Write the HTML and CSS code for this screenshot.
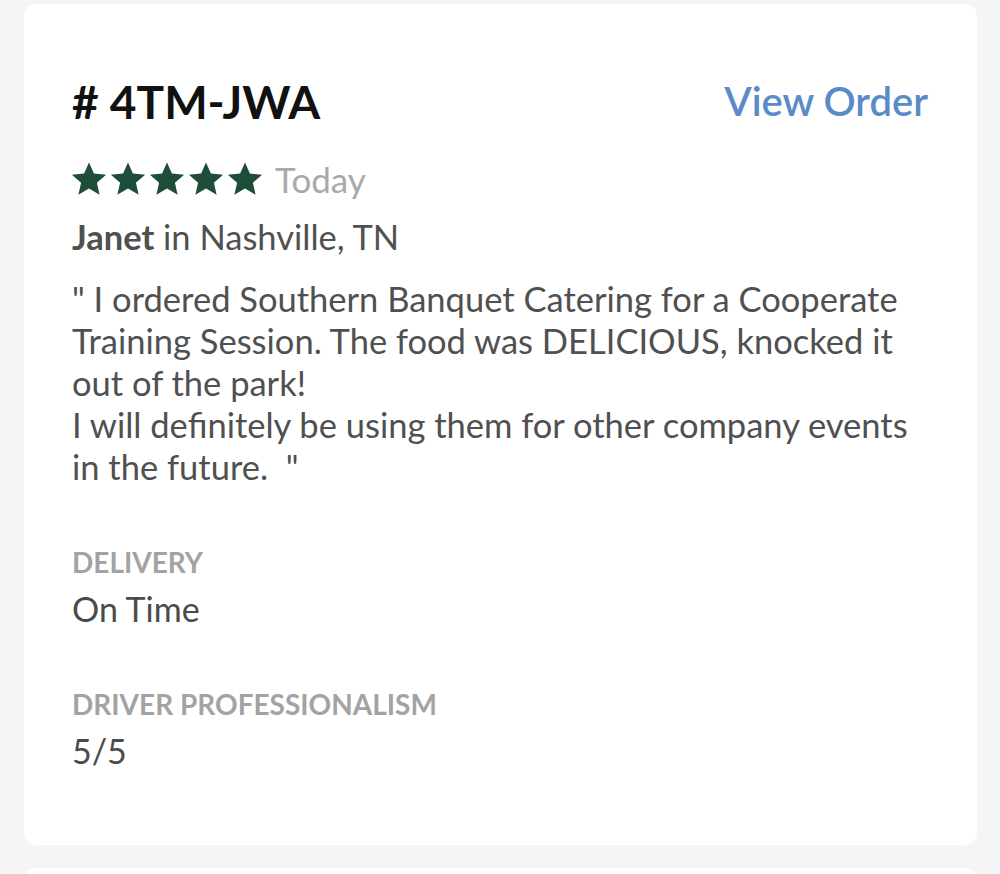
FILE: index.html
```html
<!DOCTYPE html>
<html>
<head>
<meta charset="utf-8">
<link rel="stylesheet" href="styles.css">
</head>
<body>
<div class="list">
  <div class="card">
    <div class="head">
      <h1 class="order-id"># 4TM-JWA</h1>
      <a class="view-link" href="#">View Order</a>
    </div>
    <div class="rating">
      <div class="stars">
        <svg viewBox="0 0 24 24" class="star"><path d="M12 1.5l3.1 7.1 7.7.7-5.8 5.1 1.7 7.6L12 18l-6.7 4 1.7-7.6-5.8-5.1 7.7-.7z"/></svg>
        <svg viewBox="0 0 24 24" class="star"><path d="M12 1.5l3.1 7.1 7.7.7-5.8 5.1 1.7 7.6L12 18l-6.7 4 1.7-7.6-5.8-5.1 7.7-.7z"/></svg>
        <svg viewBox="0 0 24 24" class="star"><path d="M12 1.5l3.1 7.1 7.7.7-5.8 5.1 1.7 7.6L12 18l-6.7 4 1.7-7.6-5.8-5.1 7.7-.7z"/></svg>
        <svg viewBox="0 0 24 24" class="star"><path d="M12 1.5l3.1 7.1 7.7.7-5.8 5.1 1.7 7.6L12 18l-6.7 4 1.7-7.6-5.8-5.1 7.7-.7z"/></svg>
        <svg viewBox="0 0 24 24" class="star"><path d="M12 1.5l3.1 7.1 7.7.7-5.8 5.1 1.7 7.6L12 18l-6.7 4 1.7-7.6-5.8-5.1 7.7-.7z"/></svg>
      </div>
      <span class="date">Today</span>
    </div>
    <p class="author"><strong>Janet</strong> in Nashville, TN</p>
    <p class="review">" I ordered Southern Banquet Catering for a Cooperate Training Session. The food was DELICIOUS, knocked it out of the park!<br>I will definitely be using them for other company events in the future.&nbsp; "</p>
    <div class="field">
      <div class="label">DELIVERY</div>
      <div class="value">On Time</div>
    </div>
    <div class="field">
      <div class="label">DRIVER PROFESSIONALISM</div>
      <div class="value">5/5</div>
    </div>
  </div>
  <div class="card next"></div>
</div>
</body>
</html>
```

FILE: styles.css
```css
html, body {
  margin: 0;
  padding: 0;
  background: #f4f5f7;
  font-family: Lato, "Liberation Sans", sans-serif;
}
.list {
  display: flex;
  flex-direction: column;
  gap: 23px;
  padding: 4px 23px 0 24px;
}
.card {
  background: #fff;
  border-radius: 12px;
  padding: 74px 48px 70px 48px;
  height: 841px;
  box-sizing: border-box;
}
.card.next {
  height: 200px;
}
.head {
  display: flex;
  justify-content: space-between;
  align-items: center;
  height: 46px;
}
.order-id {
  margin: 0;
  font-size: 46px;
  font-weight: 700;
  color: #111;
}
.view-link {
  font-size: 40px;
  font-weight: 600;
  color: #5b8bc7;
  text-decoration: none;
  padding-right: 1px;
}
.rating {
  display: flex;
  align-items: center;
  margin-top: 34px;
  margin-left: -2px;
  gap: 11px;
}
.stars {
  display: flex;
  gap: 1px;
}
.star {
  width: 38px;
  height: 38px;
  fill: #1e4d3a;
}
.date {
  font-size: 35px;
  color: #a9a9a9;
}
.author {
  margin: 16px 0 0;
  font-size: 34.5px;
  color: #505050;
  line-height: 42px;
}
.author strong {
  font-weight: 700;
}
.review {
  margin: 20px 0 0;
  font-size: 34.5px;
  line-height: 42px;
  color: #505050;
}
.field {
  margin-top: 56px;
}
.field + .field {
  margin-top: 56px;
}
.label {
  font-size: 28px;
  font-weight: 700;
  color: #a3a3a3;
  line-height: 36px;
}
.value {
  margin-top: 8px;
  font-size: 34px;
  color: #4a4a4a;
  line-height: 42px;
}
```
